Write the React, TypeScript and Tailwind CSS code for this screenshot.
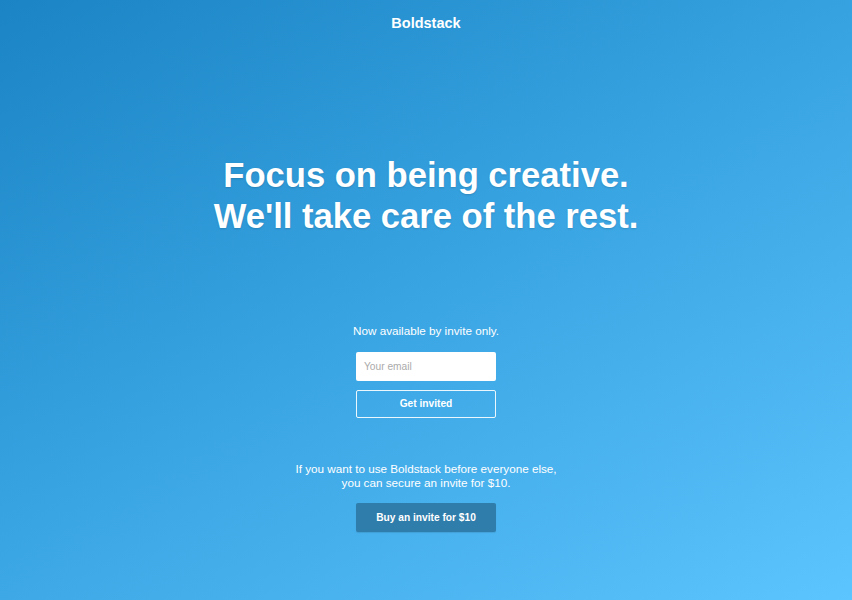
export default function App() {
  return (
    <div
      className="w-full h-[600px] flex flex-col items-center text-white bg-[linear-gradient(150deg,#1a84c4_0%,#3aa5e3_50%,#5cc4fe_100%)]"
      style={{ fontFamily: '"Liberation Sans", Arial, sans-serif' }}
    >
      <header className="pt-[14px]">
        <h2 className="text-[14.5px] font-bold leading-[18px]">Boldstack</h2>
      </header>

      <h1 className="mt-[123px] text-center text-[34.6px] font-bold leading-[41px] [text-shadow:0_1px_2px_rgba(0,0,0,0.15)]">
        Focus on being creative.
        <br />
        We'll take care of the rest.
      </h1>

      <section className="mt-[86px] flex flex-col items-center">
        <p className="text-[11.7px] leading-[16px]">Now available by invite only.</p>
        <form className="mt-[13px] flex flex-col gap-[9px] w-[140px]">
          <input
            type="email"
            placeholder="Your email"
            className="h-[29px] w-full rounded-[2px] bg-white px-[8px] text-[10.2px] text-gray-700 placeholder:text-[#aaaaaa] outline-none"
          />
          <button
            type="button"
            className="h-[28px] w-full rounded-[2px] border-[1.5px] border-white/90 text-[10.2px] font-bold"
          >
            Get invited
          </button>
        </form>
      </section>

      <section className="mt-[44px] flex flex-col items-center">
        <p className="text-center text-[11.7px] leading-[14px]">
          If you want to use Boldstack before everyone else,
          <br />
          you can secure an invite for $10.
        </p>
        <button
          type="button"
          className="mt-[13px] h-[29px] w-[140px] rounded-[2px] bg-[#2f7dab] text-[10.2px] font-bold shadow-[0_1px_1px_rgba(0,0,0,0.1)]"
        >
          Buy an invite for $10
        </button>
      </section>
    </div>
  );
}
